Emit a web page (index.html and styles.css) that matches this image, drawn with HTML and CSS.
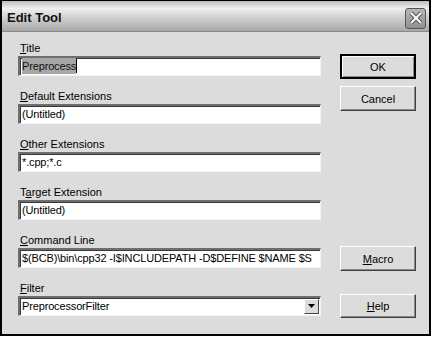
FILE: index.html
```html
<!DOCTYPE html>
<html>
<head>
  <title>Edit Tool</title>
  <link rel="stylesheet" href="styles.css">
</head>
<body>
  <div class="window">
    <div class="titlebar">
      <span class="caption">Edit Tool</span>
      <button class="close">
        <svg width="14" height="14" viewBox="0 0 14 14">
          <path d="M2 2 L12 12 M12 2 L2 12" stroke="#555" stroke-width="4"/>
          <path d="M2 2 L12 12 M12 2 L2 12" stroke="#fff" stroke-width="2"/>
        </svg>
      </button>
    </div>
    <div class="content">
      <div class="fields">
        <div class="field">
          <label><u>T</u>itle</label>
          <div class="edit"><span class="selected">Preprocess</span><span class="caret"></span></div>
        </div>
        <div class="field">
          <label><u>D</u>efault Extensions</label>
          <div class="edit">(Untitled)</div>
        </div>
        <div class="field">
          <label><u>O</u>ther Extensions</label>
          <div class="edit">*.cpp;*.c</div>
        </div>
        <div class="field">
          <label>T<u>a</u>rget Extension</label>
          <div class="edit">(Untitled)</div>
        </div>
        <div class="field">
          <label><u>C</u>ommand Line</label>
          <div class="edit">$(BCB)\bin\cpp32 -I$INCLUDEPATH -D$DEFINE $NAME $S</div>
        </div>
        <div class="field">
          <label><u>F</u>ilter</label>
          <div class="edit combo">
            <span class="combo-text">PreprocessorFilter</span>
            <span class="drop">
              <svg width="7" height="4" viewBox="0 0 7 4"><path d="M0 0 H7 L3.5 4 Z" fill="#000"/></svg>
            </span>
          </div>
        </div>
      </div>
      <div class="buttons">
        <button class="btn default">OK</button>
        <button class="btn">Cancel</button>
        <button class="btn push-down"><u>M</u>acro</button>
        <button class="btn"><u>H</u>elp</button>
      </div>
    </div>
  </div>
</body>
</html>
```

FILE: styles.css
```css
body {
  margin: 0;
  padding: 0;
  background-color: #ffffff;
  font-family: "Liberation Sans", Arial, sans-serif;
}
.window {
  width: 427px;
  height: 333px;
  border: 2px solid #000;
  border-top-width: 1px;
  background-color: #dcdcdc;
  display: flex;
  flex-direction: column;
}
.titlebar {
  height: 30px;
  display: flex;
  align-items: center;
  justify-content: space-between;
  padding: 0 3px 0 5px;
  background: linear-gradient(#bcbcbc, #efefef 25%, #d0d0d0 55%, #a8a8a8);
  border-bottom: 1px solid #8a8a8a;
}
.caption {
  font-size: 13px;
  font-weight: bold;
  color: #111;
  margin-top: 2px;
}
.close {
  width: 21px;
  height: 21px;
  margin-top: 4px;
  padding: 0;
  border: 1px solid #555;
  border-radius: 3px;
  background: linear-gradient(#b8b8b8, #909090);
  display: flex;
  align-items: center;
  justify-content: center;
}
.content {
  flex: 1;
  display: flex;
  padding: 9px 13px 16px 16px;
}
.fields {
  width: 305px;
}
.field {
  margin-bottom: 13px;
}
.field:last-child {
  margin-bottom: 0;
}
.field label {
  display: block;
  height: 15px;
  font-size: 11px;
  line-height: 14px;
  color: #000;
  padding-left: 2px;
}
.edit {
  height: 16px;
  background-color: #fff;
  border-top: 2px solid #6e6e6e;
  border-left: 2px solid #6e6e6e;
  border-bottom: 1px solid #f4f4f4;
  border-right: 1px solid #f4f4f4;
  box-shadow: inset 1px 1px 0 #3a3a3a;
  font-size: 11px;
  letter-spacing: -0.15px;
  line-height: 16px;
  padding: 0 0 1px 2px;
  color: #000;
  white-space: nowrap;
  overflow: hidden;
  display: flex;
  align-items: center;
}
.selected {
  background-color: #a6a6a6;
  color: #111;
}
.caret {
  width: 1px;
  height: 14px;
  background-color: #000;
}
.combo {
  justify-content: space-between;
  padding-right: 1px;
}
.drop {
  width: 15px;
  height: 15px;
  background-color: #dcdcdc;
  border-top: 1px solid #fff;
  border-left: 1px solid #fff;
  border-right: 1px solid #444;
  border-bottom: 1px solid #444;
  box-sizing: border-box;
  display: flex;
  align-items: center;
  justify-content: center;
}
.buttons {
  margin-left: 19px;
  display: flex;
  flex-direction: column;
  padding-top: 13px;
}
.btn {
  width: 76px;
  height: 25px;
  margin-bottom: 7px;
  font-family: "Liberation Sans", Arial, sans-serif;
  font-size: 11px;
  color: #000;
  background-color: #dcdcdc;
  border: 1px solid;
  border-color: #fff #404040 #404040 #fff;
  box-shadow: inset -1px -1px 0 #8a8a8a;
  padding: 0;
}
.btn.default {
  border: 2px solid #000;
  box-shadow: inset 1px 1px 0 #fff, inset -1px -1px 0 #8a8a8a;
}
.btn:last-child {
  margin-bottom: 0;
  height: 24px;
}
.push-down {
  margin-top: auto;
  margin-bottom: 23px;
}
```
